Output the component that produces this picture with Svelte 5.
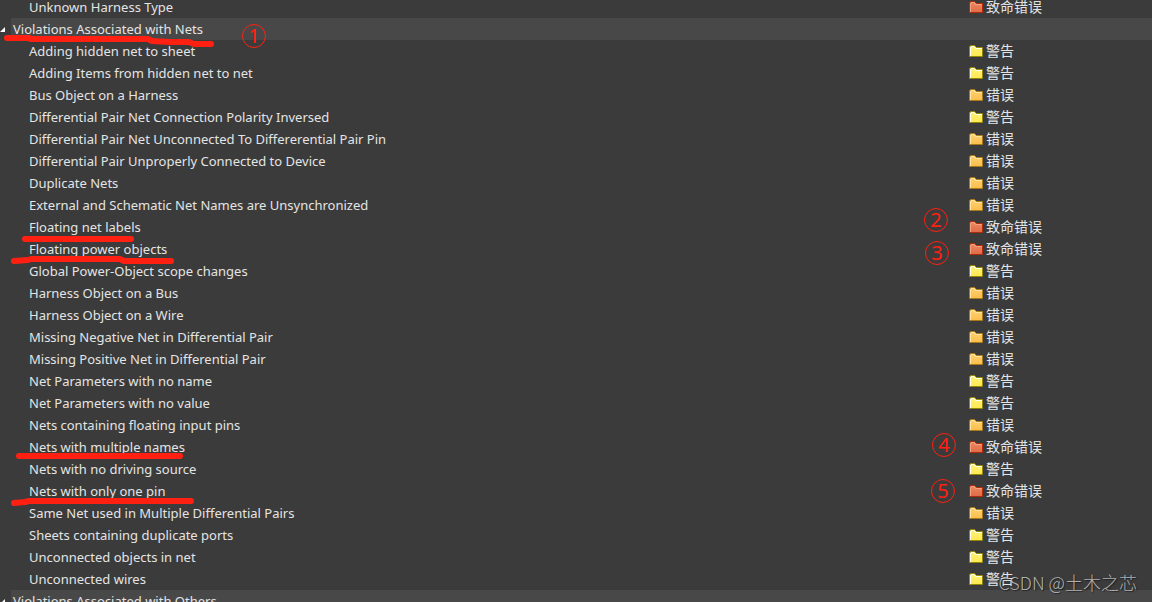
<script lang="ts">
  type Level = "warning" | "error" | "fatal";
  type Rule = { name: string; level: Level };
  type Group = { name: string; rules: Rule[] };

  const levels = {
    warning: { label: "警告", edge: "#94860a", shine: "#fffff0", top: "#fff27a", bottom: "#ffe94f" },
    error: { label: "错误", edge: "#a87a1c", shine: "#ffe6a0", top: "#ffd273", bottom: "#fbbd4b" },
    fatal: { label: "致命错误", edge: "#ad2c0c", shine: "#f4a27e", top: "#ec8b66", bottom: "#e06a45" },
  };

  const previousRules: Rule[] = [{ name: "Unknown Harness Type", level: "fatal" }];

  let groups = $state<Group[]>([
    {
      name: "Violations Associated with Nets",
      rules: [
        { name: "Adding hidden net to sheet", level: "warning" },
        { name: "Adding Items from hidden net to net", level: "warning" },
        { name: "Bus Object on a Harness", level: "error" },
        { name: "Differential Pair Net Connection Polarity Inversed", level: "warning" },
        { name: "Differential Pair Net Unconnected To Differerential Pair Pin", level: "error" },
        { name: "Differential Pair Unproperly Connected to Device", level: "error" },
        { name: "Duplicate Nets", level: "error" },
        { name: "External and Schematic Net Names are Unsynchronized", level: "error" },
        { name: "Floating net labels", level: "fatal" },
        { name: "Floating power objects", level: "fatal" },
        { name: "Global Power-Object scope changes", level: "warning" },
        { name: "Harness Object on a Bus", level: "error" },
        { name: "Harness Object on a Wire", level: "error" },
        { name: "Missing Negative Net in Differential Pair", level: "error" },
        { name: "Missing Positive Net in Differential Pair", level: "error" },
        { name: "Net Parameters with no name", level: "warning" },
        { name: "Net Parameters with no value", level: "warning" },
        { name: "Nets containing floating input pins", level: "error" },
        { name: "Nets with multiple names", level: "fatal" },
        { name: "Nets with no driving source", level: "warning" },
        { name: "Nets with only one pin", level: "fatal" },
        { name: "Same Net used in Multiple Differential Pairs", level: "error" },
        { name: "Sheets containing duplicate ports", level: "warning" },
        { name: "Unconnected objects in net", level: "warning" },
        { name: "Unconnected wires", level: "warning" },
      ],
    },
    { name: "Violations Associated with Others", rules: [] },
  ]);

  let collapsed = $state<Record<string, boolean>>({});

  const strokes = [
    "M7 38 H29 L31 39 H148 L152 41 L169 42 L189 42 L194 44 H211",
    "M25 239 H131",
    "M14 261 L28 260 L31 259 H120 L124 261 H171",
    "M19 456 H180",
    "M14 503 L25 502 L29 501 H191",
  ];

  // x is measured from the right edge, next to the report mode column
  const marks = [
    { n: 2, x: 36, y: 220 },
    { n: 3, x: 37, y: 253 },
    { n: 4, x: 44, y: 445 },
    { n: 5, x: 43, y: 491 },
  ];
</script>

{#snippet circled(n: number, x: number, y: number)}
  <circle cx={x} cy={y} r="11.5" />
  <text {x} y={y + 7} text-anchor="middle">{n}</text>
{/snippet}

{#snippet ruleRow(rule: Rule)}
  {@const level = levels[rule.level]}
  <tr>
    <td class="name">{rule.name}</td>
    <td>
      <div class="mode">
        <svg class="folder" viewBox="0 0 14 12" aria-hidden="true">
          <defs>
            <linearGradient id="fill-{rule.level}" x1="0" y1="0" x2="0" y2="1">
              <stop offset="0" stop-color={level.top} />
              <stop offset="1" stop-color={level.bottom} />
            </linearGradient>
          </defs>
          <path
            d="M.5 11.5V1.5H1.5V.5H5.5L7.5 2.5H13.5V11.5Z"
            fill="url(#fill-{rule.level})"
            stroke={level.edge}
          />
          <path d="M1.5 11V2.5H2V1.5H5L6.5 3.5H13" fill="none" stroke={level.shine} />
        </svg>
        <span>{level.label}</span>
      </div>
    </td>
  </tr>
{/snippet}

<main class="panel">
  <table>
    <colgroup>
      <col />
      <col class="mode-col" />
    </colgroup>
    <tbody>
      {#each previousRules as rule}
        {@render ruleRow(rule)}
      {/each}
      {#each groups as group}
        <tr class="group">
          <th colspan="2" scope="rowgroup">
            <button
              type="button"
              aria-expanded={!collapsed[group.name]}
              onclick={() => (collapsed[group.name] = !collapsed[group.name])}
            >
              <svg class="arrow" viewBox="0 0 5 5" aria-hidden="true">
                <path d="M5 0V5H0Z" fill="#fff" />
              </svg>
              <span>{group.name}</span>
            </button>
          </th>
        </tr>
        {#if !collapsed[group.name]}
          {#each group.rules as rule}
            {@render ruleRow(rule)}
          {/each}
        {/if}
      {/each}
    </tbody>
  </table>

  <svg class="ink left" width="280" height="520">
    {#each strokes as d}
      <path {d} />
    {/each}
    {@render circled(1, 254, 36)}
  </svg>
  <svg class="ink right" width="60" height="520">
    {#each marks as mark}
      {@render circled(mark.n, mark.x, mark.y)}
    {/each}
  </svg>

  <div class="watermark">CSDN @土木之芯</div>
</main>

<style>
  :global(body) {
    margin: 0;
    background: #3b3b3b;
  }

  .panel {
    position: relative;
    height: 100vh;
    overflow: hidden;
    background: #3b3b3b;
    color: #e4e4e4;
    font: 13px/22px "Noto Sans", "Noto Sans CJK SC", sans-serif;
  }

  table {
    width: 100%;
    margin-top: -4px;
    table-layout: fixed;
    border-collapse: collapse;
  }

  .mode-col {
    width: 183px;
  }

  tr {
    height: 22px;
  }

  td,
  th {
    height: 22px;
    padding: 0;
    white-space: nowrap;
    font-weight: 400;
    text-align: left;
  }

  .name {
    padding-left: 29px;
    overflow: hidden;
    text-overflow: ellipsis;
  }

  .group th {
    background: linear-gradient(to right, #3b3b3b 11px, #484848 11px);
  }

  button {
    display: flex;
    align-items: center;
    gap: 8px;
    height: 22px;
    padding: 0;
    border: none;
    background: none;
    color: inherit;
    font: inherit;
  }

  .arrow {
    width: 5px;
    height: 5px;
  }

  .mode {
    display: flex;
    align-items: center;
    gap: 3px;
    height: 22px;
    font-family: "Noto Sans CJK SC", sans-serif;
    font-size: 14px;
  }

  .mode span {
    padding-bottom: 2px;
  }

  .folder {
    width: 14px;
    height: 12px;
  }

  .ink {
    position: absolute;
    top: 0;
    pointer-events: none;
    fill: none;
    stroke: #ff2012;
    stroke-width: 6px;
    stroke-linecap: round;
    stroke-linejoin: round;
  }

  .ink.left {
    left: 0;
  }

  .ink.right {
    right: 192px;
  }

  .ink circle {
    stroke-width: 1px;
  }

  .ink text {
    fill: #ff2012;
    stroke: none;
    font-size: 20px;
  }

  .watermark {
    position: absolute;
    right: 15px;
    bottom: 8px;
    color: rgba(200, 200, 200, 0.85);
    font: 18px/24px "Noto Sans CJK SC", sans-serif;
    font-weight: 300;
    text-shadow: 1px 1px 1px rgba(0, 0, 0, 0.5);
  }
</style>
